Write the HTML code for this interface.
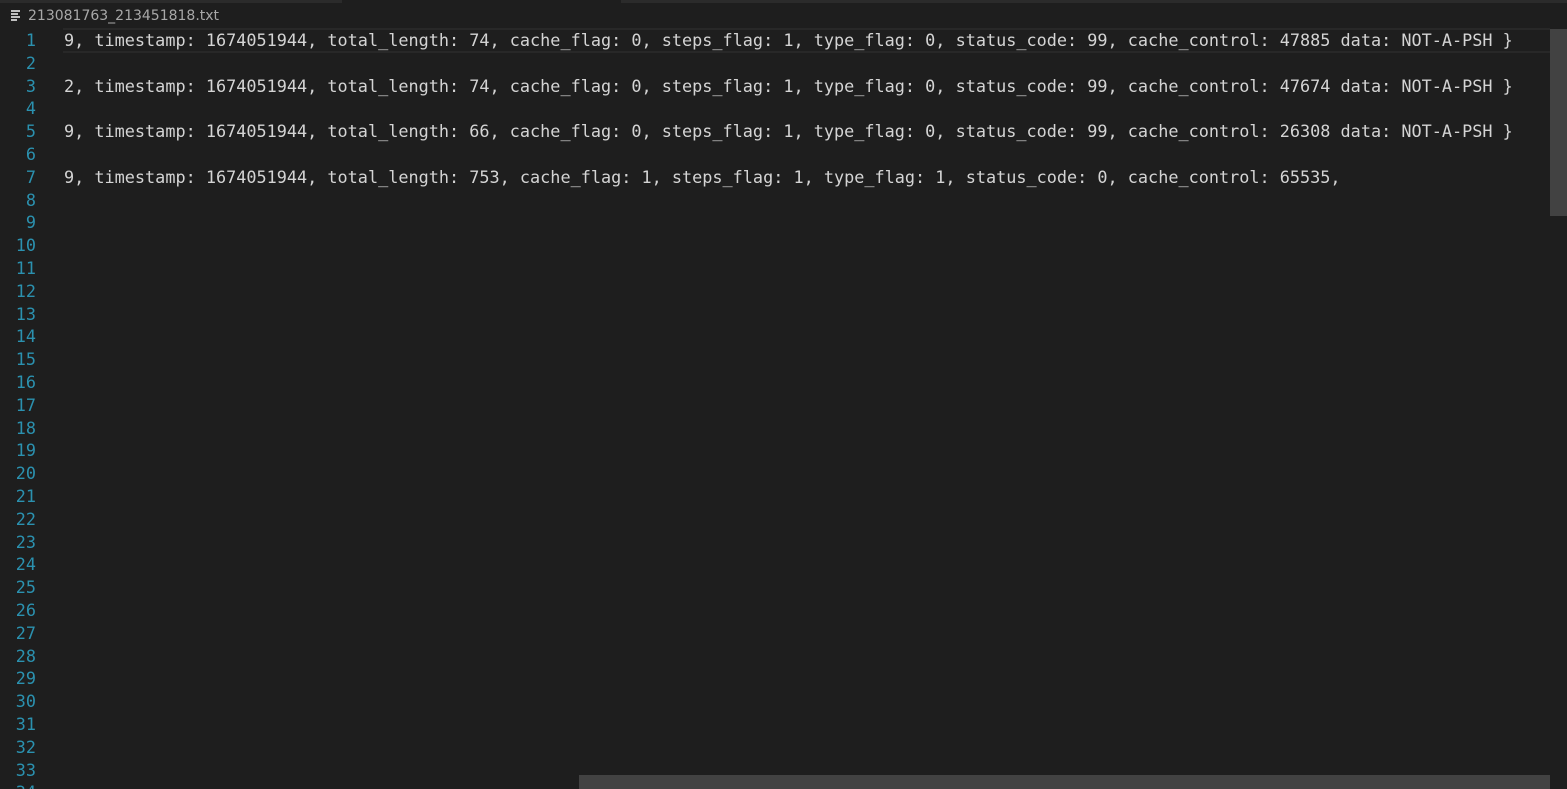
<!DOCTYPE html>
<html style="overflow:hidden;height:789px"><head><style>
body{margin:0;width:1567px;height:789px;background:#1e1e1e;overflow:hidden;position:relative;font-family:"DejaVu Sans Mono","Liberation Mono",monospace}
.strip{position:absolute;top:0;height:3px;background:#2b2b2b}
.title{position:absolute;left:28px;top:8px;font:14px "DejaVu Sans","Liberation Sans",sans-serif;color:#a8a8a8}
.icon{position:absolute;left:11px;top:10px;width:9px}
.icon div{height:1.5px;background:#c0c0c0;margin-bottom:1.6px}
.hl{position:absolute;left:63px;top:28px;width:1487px;height:21px;border-top:2px solid #282828;border-bottom:2px solid #282828}
.ln{position:absolute;left:0;width:36px;text-align:right;color:#2b91af;font-size:16.8px}
.tx{position:absolute;left:64px;color:#d4d4d4;font-size:16.84px;white-space:pre}
.vs{position:absolute;left:1550px;top:29px;width:17px;height:187px;background:#424242}
.hs{position:absolute;left:579px;top:775px;width:971px;height:14px;background:#424242}
#c{position:absolute;left:0;top:0;width:1567px;height:789px;overflow:hidden}
</style></head><body>
<div class="strip" style="left:0;width:342px"></div>
<div class="strip" style="left:621px;width:946px"></div>
<div class="icon"><div></div><div style="width:7px"></div><div></div><div style="width:6px"></div></div>
<div class="title">213081763_213451818.txt</div>
<div class="hl"></div>
<div id="c"></div>
<div class="vs"></div>
<div class="hs"></div>
<script>
var t=["9, timestamp: 1674051944, total_length: 74, cache_flag: 0, steps_flag: 1, type_flag: 0, status_code: 99, cache_control: 47885 data: NOT-A-PSH }","","2, timestamp: 1674051944, total_length: 74, cache_flag: 0, steps_flag: 1, type_flag: 0, status_code: 99, cache_control: 47674 data: NOT-A-PSH }","","9, timestamp: 1674051944, total_length: 66, cache_flag: 0, steps_flag: 1, type_flag: 0, status_code: 99, cache_control: 26308 data: NOT-A-PSH }","","9, timestamp: 1674051944, total_length: 753, cache_flag: 1, steps_flag: 1, type_flag: 1, status_code: 0, cache_control: 65535,"];
var h="";
for(var i=0;i<34;i++){var y=30+i*22.8;h+='<div class="ln" style="top:'+y+'px">'+(i+1)+'</div>';if(t[i])h+='<div class="tx" style="top:'+y+'px">'+t[i]+'</div>';}
document.getElementById("c").innerHTML=h;
</script>
</body></html>
